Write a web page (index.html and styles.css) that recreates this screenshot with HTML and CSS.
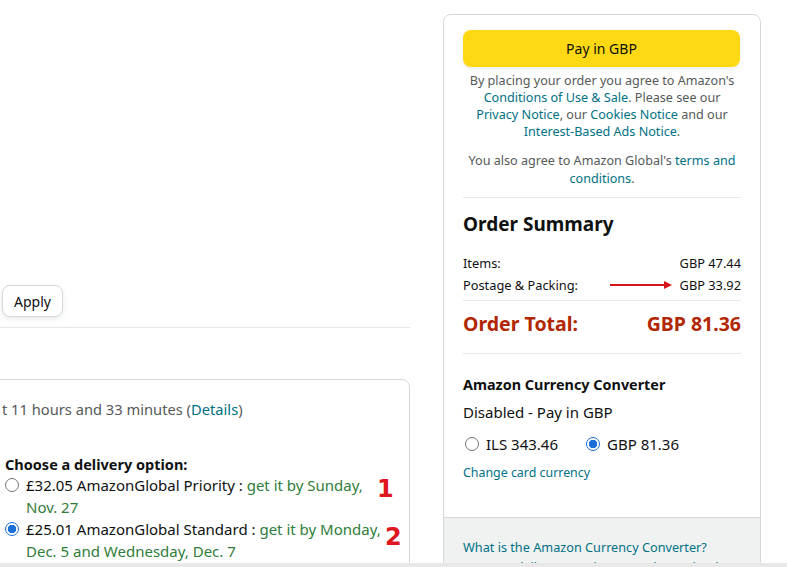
FILE: index.html
```html
<!DOCTYPE html>
<html lang="en">
<head>
<meta charset="utf-8">
<title>Checkout</title>
<link rel="stylesheet" href="styles.css">
</head>
<body>
<div class="page">
  <div class="left">
    <div class="promo">
      <button class="btn-apply">Apply</button>
    </div>
    <hr class="left-divider">
    <div class="ship-card">
      <p class="cutoff">t 11 hours and 33 minutes (<a class="link">Details</a>)</p>
      <p class="choose">Choose a delivery option:</p>
      <div class="option">
        <span class="radio"></span>
        <p class="opt-text">£32.05 AmazonGlobal Priority : <span class="green">get it by Sunday,<br>Nov. 27</span></p>
        <span class="mark mark-1">1</span>
      </div>
      <div class="option">
        <span class="radio checked"></span>
        <p class="opt-text">£25.01 AmazonGlobal Standard : <span class="green">get it by Monday,<br>Dec. 5 and Wednesday, Dec. 7</span></p>
        <span class="mark mark-2">2</span>
      </div>
    </div>
  </div>

  <div class="right">
    <div class="card">
      <div class="card-body">
        <button class="btn-pay">Pay in GBP</button>
        <p class="legal">By placing your order you agree to Amazon's<br><a class="link">Conditions of Use &amp; Sale</a>. Please see our<br><a class="link">Privacy Notice</a>, our <a class="link">Cookies Notice</a> and our<br><a class="link">Interest-Based Ads Notice</a>.</p>
        <p class="legal legal-2">You also agree to Amazon Global's <a class="link">terms and<br>conditions</a>.</p>
        <hr class="divider d1">
        <h2 class="summary-title">Order Summary</h2>
        <div class="row"><span>Items:</span><span>GBP 47.44</span></div>
        <div class="row"><span>Postage &amp; Packing:</span>
          <span class="val-group">
            <svg class="arrow" width="62" height="10" viewBox="0 0 62 10"><line x1="0" y1="5" x2="55" y2="5" stroke="#d7141a" stroke-width="2"/><path d="M54 1 L62 5 L54 9 Z" fill="#d7141a"/></svg>
            <span>GBP 33.92</span>
          </span>
        </div>
        <hr class="divider d2">
        <div class="total"><span>Order Total:</span><span>GBP 81.36</span></div>
        <hr class="divider d3">
        <h3 class="acc-title">Amazon Currency Converter</h3>
        <p class="acc-status">Disabled - Pay in GBP</p>
        <div class="cur-options">
          <label class="cur"><span class="radio"></span>ILS 343.46</label>
          <label class="cur"><span class="radio checked"></span>GBP 81.36</label>
        </div>
        <a class="link change">Change card currency</a>
      </div>
      <div class="card-foot">
        <a class="link">What is the Amazon Currency Converter?</a>
        <a class="link">How are daily conversion rates determined?</a>
      </div>
    </div>
  </div>
</div>
<div class="bottom-strip"></div>
</body>
</html>
```

FILE: styles.css
```css
* { box-sizing: border-box; }
html, body { margin: 0; padding: 0; }
body {
  width: 787px;
  height: 567px;
  overflow: hidden;
  background: #fff;
  font-family: "Noto Sans", "Open Sans", sans-serif;
  color: #0f1111;
  position: relative;
}
p { margin: 0; }
a.link { color: #007185; text-decoration: none; }

.page {
  display: flex;
  gap: 33px;
  align-items: flex-start;
}

/* left column */
.left {
  width: 410px;
  overflow: hidden;
  height: 567px;
}
.promo { padding-top: 285px; padding-left: 2px; }
.btn-apply {
  width: 61px;
  height: 32px;
  border: 1px solid #d5d9d9;
  border-radius: 8px;
  background: #fff;
  box-shadow: 0 2px 5px rgba(213,217,217,.5);
  font-family: inherit;
  font-size: 14px;
  color: #0f1111;
  padding: 0;
}
.left-divider {
  margin: 10px 0 0;
  border: 0;
  border-top: 1px solid #e7e7e7;
}
.ship-card {
  margin-top: 51px;
  margin-left: -20px;
  border: 1px solid #d5d9d9;
  border-radius: 8px;
  padding: 19px 0 20px 21px;
  height: 240px;
}
.cutoff { font-size: 14.7px; line-height: 20px; color: #565959; }
.choose { margin-top: 35px; font-size: 14.5px; line-height: 20px; font-weight: 700; margin-left: 3px; }
.option { display: flex; align-items: flex-start; position: relative; }
.option .radio { margin: 4px 0 0 3px; }
.opt-text { margin-left: 7px; font-size: 15px; line-height: 22px; }
.green { color: #2f7d3a; }
.mark {
  position: absolute;
  font-family: "DejaVu Sans", sans-serif;
  font-weight: 700;
  font-size: 24px;
  line-height: 1;
  color: #e0161d;
}
.mark-1 { left: 375px; top: 3px; }
.mark-2 { left: 383px; top: 7px; }

.radio {
  flex: none;
  display: inline-block;
  width: 14px;
  height: 14px;
  border: 1px solid #767676;
  border-radius: 50%;
  background: #fff;
}
.radio.checked {
  border: 1px solid #1a6fd8;
  background: radial-gradient(circle, #1a6fd8 0 4px, #fff 4.5px);
}

/* right column */
.right { width: 318px; }
.card {
  margin-top: 14px;
  border: 1px solid #d5d9d9;
  border-radius: 8px;
  overflow: hidden;
}
.card-body { padding: 15px 19px 35px; }
.btn-pay {
  display: block;
  width: 277px;
  height: 37px;
  border: 0;
  border-radius: 8px;
  background: #ffd814;
  box-shadow: 0 2px 5px rgba(213,217,217,.5);
  font-family: inherit;
  font-size: 14px;
  color: #0f1111;
}
.legal {
  margin-top: 5px;
  text-align: center;
  font-size: 12.6px;
  line-height: 17px;
  color: #565959;
}
.legal-2 { margin-top: 12px; line-height: 17.5px; }
.divider { border: 0; border-top: 1px solid #e7e7e7; margin: 0; }
.d1 { margin-top: 10px; }
.summary-title {
  margin: 14px 0 0;
  font-size: 19px;
  line-height: 24px;
  font-weight: 700;
}
.row {
  display: flex;
  justify-content: space-between;
  align-items: center;
  font-size: 12.8px;
  line-height: 22px;
}
.summary-title + .row { margin-top: 16px; }
.val-group { display: flex; align-items: center; gap: 8px; }
.arrow { display: block; }
.d2 { margin-top: 4px; }
.total {
  margin-top: 10px;
  display: flex;
  justify-content: space-between;
  font-size: 19.5px;
  line-height: 26px;
  font-weight: 700;
  color: #b12704;
}
.d3 { margin-top: 16px; }
.acc-title { margin: 21px 0 0; font-size: 14.4px; line-height: 20px; font-weight: 700; }
.acc-status { margin-top: 7px; font-size: 15px; line-height: 20px; }
.cur-options { margin-top: 11px; display: flex; gap: 28px; padding-left: 2px; }
.cur { display: flex; align-items: center; gap: 7px; font-size: 15px; line-height: 22px; }
.change { display: block; margin-top: 9px; font-size: 12.4px; line-height: 18px; }
.card-foot {
  border-top: 1px solid #d5d9d9;
  background: #f0f2f2;
  padding: 20px 19px 20px;
  font-size: 12.7px;
  line-height: 18px;
}
.card-foot a { display: block; }
.card-foot a + a { margin-top: 2px; }

.bottom-strip {
  position: absolute;
  left: 0;
  right: 0;
  bottom: 0;
  height: 4px;
  background: #e8e8e8;
}
```
